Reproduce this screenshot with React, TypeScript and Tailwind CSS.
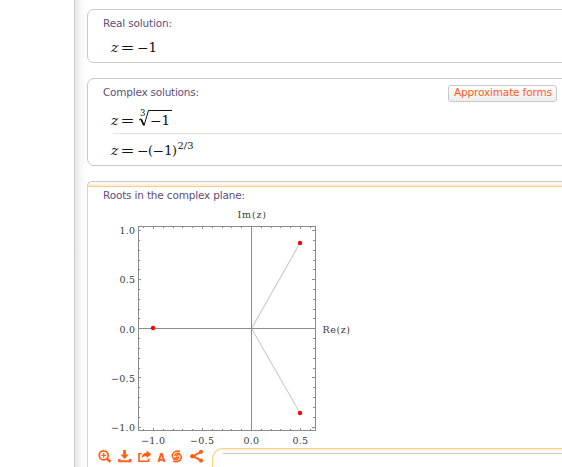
import type { ReactNode } from 'react';

const ticks = Array.from({ length: 21 }, (_, i) => i - 10);
const xTicks = Array.from({ length: 18 }, (_, i) => i - 11);

const xPos = (n: number) => Math.round(251 + n * 9.8) + 0.5;
const yPos = (n: number) => Math.round(328.3 - n * 9.82) + 0.5;

const Label = ({ children, width }: { children: string; width: number }) => (
  <svg width={width} height="14" className="block overflow-visible">
    <text
      x="0"
      y="10"
      textLength={width}
      lengthAdjust="spacing"
      className="fill-[#5e4f78] font-['DejaVu_Sans',sans-serif] text-[10.5px]"
    >
      {children}
    </text>
  </svg>
);

const Pod = ({ className, children }: { className: string; children: ReactNode }) => (
  <section className={`box-border w-[490px] shrink-0 rounded-[7px] border border-[#c8c8c8] bg-white pl-[15px] ${className}`}>
    {children}
  </section>
);

const MathText = ({ x, y, size = 13.5, width, children }: { x: number; y: number; size?: number; width?: number; children: string }) => (
  <text x={x} y={y} fontSize={size} textLength={width} lengthAdjust="spacingAndGlyphs">
    {children}
  </text>
);

const mathClass = "block overflow-visible fill-[#111] font-['DejaVu_Serif',serif]";

// "z =" that starts every solution
const ZEquals = ({ y }: { y: number }) => (
  <>
    <text x="0" y={y} fontSize="12.5" fontStyle="italic" textLength="7.5" lengthAdjust="spacingAndGlyphs">z</text>
    <MathText x={9.5} y={y} width={14}>=</MathText>
  </>
);

const Plot = () => (
  <svg width="270" height="245" viewBox="103 205 270 245" className="block overflow-visible">
    <path d="M251.5 328.5 L300 243 M251.5 328.5 L300 413" fill="none" stroke="#cccccc" strokeWidth="1.2" />
    <g stroke="#8c8c8c" strokeWidth="1" shapeRendering="crispEdges" fill="none">
      <path d="M138.5 226.5 H315.5 V430.5 H138.5 Z" />
      <path d="M251.5 226.5 V430.5 M138.5 328.5 H315.5" />
      {ticks.map((n) => {
        const len = n % 5 === 0 ? 2 : 1;
        return <path key={n} d={`M139 ${yPos(n)} h${len} M315 ${yPos(n)} h${-len - 1}`} />;
      })}
      {xTicks.map((n) => {
        const len = n % 5 === 0 ? 2 : 1;
        return <path key={n} d={`M${xPos(n)} 227 v${len} M${xPos(n)} 430 v${-len}`} />;
      })}
    </g>
    <g fill="#f00">
      <circle cx="153" cy="328" r="2.2" />
      <circle cx="300" cy="243" r="2.2" />
      <circle cx="300" cy="413" r="2.2" />
    </g>
    <g className="fill-[#3a3a3a] font-['DejaVu_Serif',serif] text-[9.5px]">
      <text x="119.5" y="234" textLength="15.5">1.0</text>
      <text x="119.5" y="283" textLength="15.5">0.5</text>
      <text x="119.5" y="333" textLength="15.5">0.0</text>
      <text x="111" y="382" textLength="24">−0.5</text>
      <text x="111" y="431" textLength="24">−1.0</text>
      <text x="141" y="444" textLength="24">−1.0</text>
      <text x="190" y="444" textLength="24">−0.5</text>
      <text x="243.5" y="444" textLength="15.5">0.0</text>
      <text x="292.5" y="444" textLength="15.5">0.5</text>
      <text x="237.5" y="218" textLength="28.5">Im(z)</text>
      <text x="322.5" y="333" textLength="27.5">Re(z)</text>
    </g>
  </svg>
);

const Toolbar = () => (
  <div className="flex h-[15px] items-center text-[#ff6014]">
    <svg width="14" height="15" viewBox="0 0 14 15" className="-ml-[5px]" fill="none" stroke="currentColor">
      <circle cx="5.7" cy="6.3" r="4.5" strokeWidth="1.8" />
      <path d="M3.3 6.3 H8.1 M5.7 3.9 V8.7" strokeWidth="1.3" />
      <path d="M9 9.7 L12.5 12.8" strokeWidth="2.5" />
    </svg>
    <svg width="14" height="15" viewBox="0 0 14 15" className="ml-[6px]" fill="currentColor">
      <path d="M5.2 1 H8 V5.5 H10.7 L6.6 10 L2.5 5.5 H5.2 Z" />
      <path d="M0.2 10 H2.5 V11.3 H10.9 V10 H13.2 V13.3 H0.2 Z" />
    </svg>
    <svg width="14" height="15" viewBox="0 0 14 15" className="ml-[6px]" fill="currentColor">
      <path d="M4 4 H0.2 V13 H11.3 V9 L9.7 10.2 V11.4 H1.8 V5.5 H3.3 Z" />
      <path d="M8.5 1.5 L13.3 5.3 L8.5 9.2 V7 Q5.5 6.7 3.7 9.2 Q3.8 4 8.5 3.8 Z" />
    </svg>
    <svg width="10" height="15" className="ml-[5px] block overflow-visible" fill="currentColor">
      <text x="0.5" y="12.5" textLength="8" lengthAdjust="spacingAndGlyphs" className="font-['DejaVu_Sans',sans-serif] text-[12px] font-bold">A</text>
    </svg>
    <svg width="12" height="15" viewBox="0 0 12 15" className="ml-[4px]" fill="none" stroke="currentColor" strokeWidth="1.5">
      <path d="M9 2.3 C4 1.2 0.8 4.2 1.2 7.4 C1.6 9.8 5.2 10 6.2 7.6" />
      <path d="M9.2 4.6 C6 3.4 3.4 5 3.9 7.2" />
      <path d="M2 12.2 C7 13.7 10.6 11 10.2 7.6 C9.8 5 6.4 4.8 5.3 7.2" />
      <path d="M2.2 10.3 C5.4 11.5 8 10 7.5 7.4" />
    </svg>
    <svg width="14" height="15" viewBox="0 0 14 15" className="ml-[7px]" fill="currentColor">
      <path d="M11 2.8 L3 7.2 L11 11.6" fill="none" stroke="currentColor" strokeWidth="1.9" />
      <circle cx="2.4" cy="7.2" r="2.2" />
      <circle cx="11" cy="2.8" r="2.1" />
      <circle cx="11" cy="11.6" r="2.1" />
    </svg>
  </div>
);

export default function App() {
  return (
    <div className="flex h-[467px] w-[562px] overflow-hidden bg-white">
      <div className="w-[74px] shrink-0" />
      <main className="flex w-[488px] flex-col border-l border-[#cbcbcb] bg-[linear-gradient(to_right,#e5e5e5,#f8f8f8_6px,#fff_13px)] pt-[9px] pl-[12px]">
        <Pod className="h-[54px] pt-[7px]">
          <Label width={69}>Real solution:</Label>
          <svg width="60" height="20" className={`mt-[7px] ml-[8px] ${mathClass}`}>
            <ZEquals y={14} />
            <MathText x={26} y={14.5} width={11.5}>−</MathText>
            <MathText x={37.5} y={14}>1</MathText>
          </svg>
        </Pod>

        <Pod className="mt-[15px] h-[88px] pt-[7px]">
          <div className="flex h-[16px] items-start">
            <Label width={96}>Complex solutions:</Label>
            <button className="-mt-px ml-[249px] flex h-[17px] w-[109px] shrink-0 items-center justify-center rounded-[3px] border border-[#c8c8c8] bg-linear-to-b from-white to-[#eeeeee]">
              <svg width="98" height="15" className="block overflow-visible">
                <text x="0" y="10" textLength="98" className="fill-[#ff5a1c] font-['DejaVu_Sans',sans-serif] text-[10.5px]">
                  Approximate forms
                </text>
              </svg>
            </button>
          </div>
          <svg width="90" height="22" className={`mt-[8px] ml-[8px] ${mathClass}`}>
            <ZEquals y={15} />
            <path d="M28 10 L30 8.8 L33 15.5 L37.5 0.5 H61" fill="none" stroke="#111" strokeWidth="1" />
            <path d="M30 9.2 L32.8 15.2" stroke="#111" strokeWidth="1.7" />
            <MathText x={39} y={15.5} width={11.5}>−</MathText>
            <MathText x={29} y={6} size={8.5}>3</MathText>
            <MathText x={50.5} y={15}>1</MathText>
          </svg>
          <div className="mt-px ml-[10px] h-px bg-[#e4e2dc]" />
          <svg width="100" height="22" className={`mt-[7px] ml-[8px] ${mathClass}`}>
            <ZEquals y={14} />
            <MathText x={26} y={14.5} width={11.5}>−</MathText>
            <MathText x={37} y={14} width={5}>(</MathText>
            <MathText x={41.5} y={14.5} width={11.5}>−</MathText>
            <MathText x={53} y={14}>1</MathText>
            <MathText x={61} y={14} width={5}>)</MathText>
            <MathText x={66.5} y={8} size={9.5} width={16}>2/3</MathText>
          </svg>
        </Pod>

        <section className="mt-[15px] w-[490px] shrink-0">
          <div className="h-[5px] rounded-tl-[6px] border-t border-l border-[#c8c8c8] bg-linear-to-b from-white to-[#ffe9da]" />
          <div className="h-[286px] border-t border-l border-[#fbd07f] bg-white pt-[2px] pl-[15px]">
            <Label width={142}>Roots in the complex plane:</Label>
            <div className="mt-[2px]">
              <Plot />
            </div>
            <div className="-mt-[2px] flex h-[19px]">
              <div className="w-[109px] shrink-0 pt-px">
                <Toolbar />
              </div>
              <div className="h-[30px] w-[11px] shrink-0 rounded-tl-[11px] border-t border-l border-[#fbd07f]" />
              <div className="h-[6px] grow border-t border-b border-t-[#fbd07f] border-b-[#c8c8c8] bg-linear-to-b from-[#ffeee3] to-white" />
            </div>
          </div>
        </section>
      </main>
    </div>
  );
}
